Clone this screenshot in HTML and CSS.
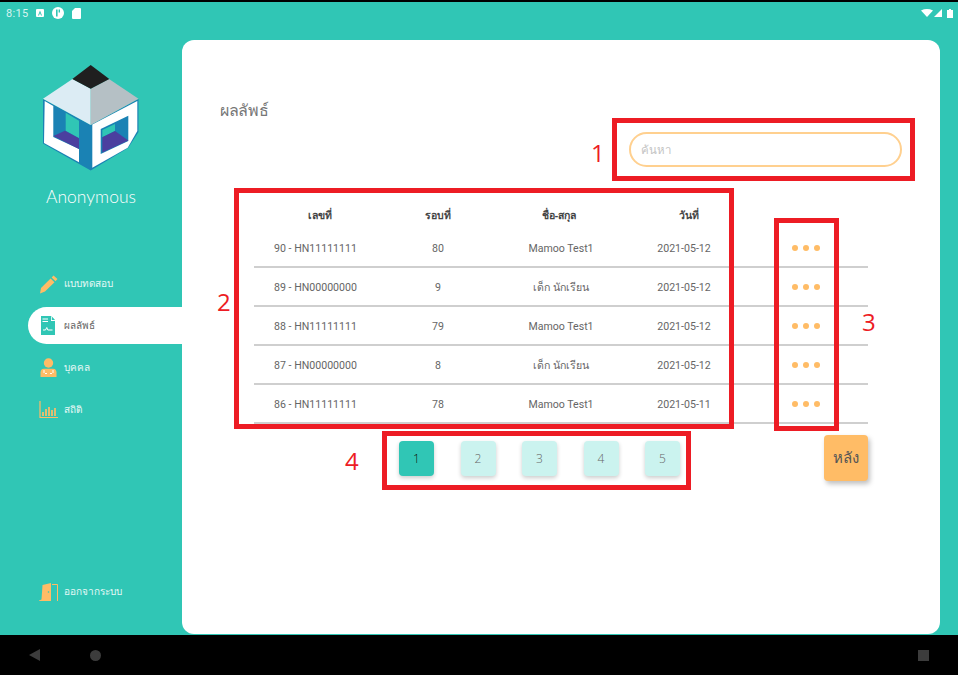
FILE: index.html
```html
<!DOCTYPE html>
<html lang="th">
<head>
    <meta charset="UTF-8">
    <meta name="viewport" content="width=device-width, initial-scale=1.0">
    <title>ผลลัพธ์</title>
    <link rel="stylesheet" href="styles.css">
</head>
<body>
    <div class="screen">
        <div class="status-bar">
            <div class="status-left">
                <span class="clock">8:15</span>
                <svg class="status-icon" width="8" height="8" viewBox="0 0 8 8"><rect width="8" height="8" rx="1" fill="#fff"/><path d="M4 1.6 6 6.4H5L4 4 3 6.4H2z" fill="#30c6b5"/></svg>
                <svg class="status-icon" width="12" height="12" viewBox="0 0 12 12"><circle cx="6" cy="6" r="6" fill="#fff"/><rect x="4" y="2.5" width="1.6" height="7" fill="#30c6b5"/><rect x="6.6" y="2.5" width="1.4" height="3" fill="#30c6b5"/></svg>
                <svg class="status-icon" width="9" height="11" viewBox="0 0 9 11"><path d="M3 0H8a1 1 0 0 1 1 1V10a1 1 0 0 1-1 1H1a1 1 0 0 1-1-1V3z" fill="#fff"/></svg>
            </div>
            <div class="status-right">
                <svg width="12" height="8" viewBox="0 0 12 8"><path d="M0 1.4Q6-1.4 12 1.4L6 8z" fill="#fff"/></svg>
                <svg width="8" height="8" viewBox="0 0 8 8"><path d="M8 0V8H0z" fill="#fff"/></svg>
                <svg class="battery" width="6" height="9" viewBox="0 0 6 9"><path d="M2 0H4V1H6V9H0V1H2z" fill="#fff"/></svg>
            </div>
        </div>

        <div class="main">
            <aside class="sidebar">
                <svg class="logo" width="98" height="106" viewBox="42 65 98 106">
                    <path d="M43 99 90.7 125 138.500 99V132L128 148 90.700 170.500 43 143.500z" fill="#1a82b4"/>
                    <path d="M44.700 101 53.300 106V137L79 149V162.300L44 143z" fill="#fff"/>
                    <path d="M65.700 112.700 79 120.700V138.300L65.700 130.700z" fill="#30c6b5"/>
                    <path d="M53.300 136 65 130.700 79 138.300V149z" fill="#4b3f9f"/>
                    <path d="M92.300 124.500 137.300 101V131L127.700 147.700 92.300 167.700z" fill="#fff"/>
                    <path d="M100.700 129 128.300 115.700V141L100.700 154z" fill="#1a82b4"/>
                    <path d="M102.300 130 115 124V131L102.300 137.300z" fill="#30c6b5"/>
                    <path d="M102.300 137.300 115 131 128.300 140.500 102.300 152.500z" fill="#4b3f9f"/>
                    <path d="M72.500 79 90.700 88.700V125L43 98.700z" fill="#dcecf4"/>
                    <path d="M109 79 138.500 98.700 90.700 125V88.700z" fill="#b5c0c5"/>
                    <path d="M90.700 65 109.300 79 90.700 88.700 72.300 79z" fill="#1f1f1f"/>
                </svg>
                <div class="user-name">Anonymous</div>

                <nav class="menu">
                    <a class="menu-item" href="#">
                        <svg width="20" height="20" viewBox="0 0 20 20"><path d="M14.500 1.500 18.500 5 16.500 7.200 12.600 3.600zM11.600 4.600 15.500 8.200 6 17.500 1 19.500 2 14z" fill="#ffbc66"/></svg>
                        <span>แบบทดสอบ</span>
                    </a>
                    <a class="menu-item active" href="#">
                        <svg width="20" height="20" viewBox="0 0 20 20"><path d="M2 0H12L16 4.500 16 19H2z" fill="#30c6b5"/><path d="M12 0V5H16.500z" fill="#fff"/><path d="M12.800 0.500 16 4H12.800z" fill="#30c6b5"/><path d="M3.500 3H9M3.500 5.500H9" stroke="#fff" stroke-width="1"/><path d="M4 14H6.500L7.800 11.500 8.800 14H13.500" stroke="#fff" stroke-width="1" fill="none"/></svg>
                        <span>ผลลัพธ์</span>
                    </a>
                    <a class="menu-item" href="#">
                        <svg width="20" height="20" viewBox="0 0 20 20"><circle cx="9.500" cy="5" r="4.700" fill="#ffbc66"/><path d="M1.500 19V14.500Q1.500 11 5 10.800H14Q17.500 11 17.500 14.500V19z" fill="#ffbc66"/><path d="M5 12V15M14 12V15M6 15.500H8M11 15.500H13" stroke="#fff" stroke-width="1" fill="none"/></svg>
                        <span>บุคคล</span>
                    </a>
                    <a class="menu-item" href="#">
                        <svg width="20" height="20" viewBox="0 0 20 20"><path d="M1 1V17.500H19" stroke="#ffbc66" stroke-width="1.200" fill="none"/><path d="M4 12V16M7 9V16M10 7V16M13 10V16M16 8V16" stroke="#ffbc66" stroke-width="1.700"/></svg>
                        <span>สถิติ</span>
                    </a>
                </nav>

                <a class="menu-item logout" href="#">
                    <svg width="20" height="20" viewBox="0 0 20 20"><path d="M0 18.500 2.500 17.500 3.500 3 12 1V19H0z" fill="#ffbc66"/><path d="M13 2.500H18.500V19" stroke="#ffbc66" stroke-width="1" fill="none"/><circle cx="9.500" cy="10" r="0.800" fill="#30c6b5"/></svg>
                    <span>ออกจากระบบ</span>
                </a>
            </aside>

            <section class="card">
                <h1 class="page-title">ผลลัพธ์</h1>
                <input class="search" type="text" placeholder="ค้นหา">

                <table class="result-table">
                    <thead>
                        <tr><th class="col-no">เลขที่</th><th class="col-round">รอบที่</th><th class="col-name">ชื่อ-สกุล</th><th class="col-date">วันที่</th><th></th></tr>
                    </thead>
                    <tbody>
                        <tr><td class="cell-no">90 - HN11111111</td><td>80</td><td class="cell-name">Mamoo Test1</td><td class="cell-date">2021-05-12</td><td class="dots"><i></i><i></i><i></i></td></tr>
                        <tr><td class="cell-no">89 - HN00000000</td><td>9</td><td class="cell-name">เด็ก นักเรียน</td><td class="cell-date">2021-05-12</td><td class="dots"><i></i><i></i><i></i></td></tr>
                        <tr><td class="cell-no">88 - HN11111111</td><td>79</td><td class="cell-name">Mamoo Test1</td><td class="cell-date">2021-05-12</td><td class="dots"><i></i><i></i><i></i></td></tr>
                        <tr><td class="cell-no">87 - HN00000000</td><td>8</td><td class="cell-name">เด็ก นักเรียน</td><td class="cell-date">2021-05-12</td><td class="dots"><i></i><i></i><i></i></td></tr>
                        <tr><td class="cell-no">86 - HN11111111</td><td>78</td><td class="cell-name">Mamoo Test1</td><td class="cell-date">2021-05-11</td><td class="dots"><i></i><i></i><i></i></td></tr>
                    </tbody>
                </table>

                <div class="table-footer">
                    <div class="pager">
                        <button class="page-btn current">1</button>
                        <button class="page-btn">2</button>
                        <button class="page-btn">3</button>
                        <button class="page-btn">4</button>
                        <button class="page-btn">5</button>
                    </div>
                    <button class="back-btn">หลัง</button>
                </div>
            </section>
        </div>

        <div class="nav-bar">
            <svg width="12" height="12" viewBox="0 0 12 12"><path d="M11 0V12L0 6z" fill="#3c3c3c"/></svg>
            <span class="nav-home"></span>
            <span class="nav-recent"></span>
        </div>

        <!-- numbered callouts drawn over the screenshot -->
        <div class="mark mark-search"></div>
        <div class="mark mark-table"></div>
        <div class="mark mark-dots"></div>
        <div class="mark mark-pager"></div>
        <span class="mark-num num-1">1</span>
        <span class="mark-num num-2">2</span>
        <span class="mark-num num-3">3</span>
        <span class="mark-num num-4">4</span>
    </div>
</body>
</html>
```

FILE: styles.css
```css
:root {
    --teal: #30c6b5;
    --orange: #ffbc66;
    --red: #ed1c24;
    --line: #cfcfcf;
    --thai: "Noto Sans", "DejaVu Sans", sans-serif;
}

* {
    box-sizing: border-box;
}

body {
    margin: 0;
    background: #000;
    font-family: Roboto, "Noto Sans", sans-serif;
    color: #666;
}

.screen {
    position: relative;
    width: 958px;
    height: 675px;
    padding-top: 2px;
    display: flex;
    flex-direction: column;
    overflow: hidden;
}

.status-bar {
    height: 38px;
    flex: none;
    background: var(--teal);
    display: flex;
    justify-content: space-between;
    padding: 4px 5px 0 6px;
    color: #d8f4f0;
}

.status-left,
.status-right {
    display: flex;
    align-items: center;
    height: 14px;
}

.status-right {
    gap: 1px;
}

.battery {
    margin-left: 4px;
}

.clock {
    font-size: 11px;
    width: 30px;
    letter-spacing: 0.3px;
}

.status-icon {
    margin-right: 8px;
}

.main {
    flex: 1;
    display: flex;
    background: var(--teal);
}

.sidebar {
    width: 182px;
    flex: none;
    display: flex;
    flex-direction: column;
    padding: 25px 0 25px 0;
}

.logo {
    margin-left: 42px;
    display: block;
}

.user-name {
    margin-top: 14px;
    width: 182px;
    text-align: center;
    color: #fff;
    font-family: Lato, sans-serif;
    font-weight: 300;
    font-size: 17.500px;
    line-height: 24px;
}

.menu {
    margin-top: 56px;
    display: flex;
    flex-direction: column;
    gap: 5px;
}

.menu-item {
    height: 37px;
    margin-left: 28px;
    padding-left: 11px;
    display: flex;
    align-items: center;
    gap: 5px;
    color: #e6f8f5;
    font-family: var(--thai);
    font-size: 10px;
    text-decoration: none;
}

.menu-item.active {
    background: #fff;
    color: #666;
    border-radius: 19px 0 0 19px;
}

.logout {
    margin-top: auto;
}

.card {
    width: 758px;
    height: 594px;
    background: #fff;
    border-radius: 12px;
    padding: 58px 38px 0;
}

.page-title {
    margin: 0;
    font-family: var(--thai);
    font-size: 16px;
    font-weight: 300;
    line-height: 24px;
    letter-spacing: -0.3px;
    color: #777;
}

.search {
    display: block;
    width: 273px;
    height: 35px;
    margin: 10px 0 0 auto;
    padding: 0 10px;
    border: 2px solid #ffd08f;
    border-radius: 18px;
    outline: none;
    font-family: var(--thai);
    font-size: 11.500px;
}

.search::placeholder {
    color: #c4c4c4;
}

.result-table {
    width: 614px;
    margin: 30px 34px 0;
    border-collapse: collapse;
    table-layout: fixed;
    font-size: 10.600px;
}

.result-table th {
    height: 31px;
    padding-top: 6px;
    color: #444;
    font-family: var(--thai);
    font-size: 10.500px;
    font-weight: 700;
}

.col-no { width: 132px; }
.col-round { width: 104px; }
.col-name { width: 138px; }
.col-date { width: 122px; }

.result-table td {
    height: 39px;
    padding: 2px 0 0;
    text-align: center;
    border-bottom: 2px solid var(--line);
}

.result-table .cell-no {
    padding-right: 9px;
}

.result-table .cell-name {
    padding-left: 4px;
}

.result-table .cell-date {
    padding-right: 10px;
}

.result-table .dots {
    padding: 0 6px 0 0;
}

.dots i {
    display: inline-block;
    width: 6px;
    height: 6px;
    margin: 0 2.350px;
    border-radius: 50%;
    background: var(--orange);
    vertical-align: middle;
}

.table-footer {
    width: 614px;
    margin: 11px 34px 0;
    display: flex;
    justify-content: space-between;
    align-items: flex-start;
}

.pager {
    margin: 6px 0 0 145px;
    display: flex;
    gap: 26.500px;
}

.page-btn {
    width: 35px;
    height: 35px;
    padding: 0;
    border: none;
    border-radius: 4px;
    background: #cbf3ef;
    color: #666;
    font-family: "Open Sans", sans-serif;
    font-weight: 300;
    font-size: 12px;
    box-shadow: 0 2px 4px rgba(0, 0, 0, 0.2);
}

.page-btn.current {
    background: var(--teal);
    color: #111;
}

.back-btn {
    width: 44px;
    height: 46px;
    padding: 0;
    border: none;
    border-radius: 4px;
    background: var(--orange);
    color: #555;
    font-family: var(--thai);
    font-size: 15px;
    font-weight: 300;
    box-shadow: 2px 3px 5px rgba(0, 0, 0, 0.25);
}

.nav-bar {
    position: relative;
    height: 40px;
    flex: none;
    background: #000;
    display: flex;
    align-items: center;
    padding-left: 29px;
}

.nav-home {
    width: 11px;
    height: 11px;
    margin-left: 49px;
    border-radius: 50%;
    background: #3c3c3c;
}

.nav-recent {
    width: 11px;
    height: 11px;
    margin-left: auto;
    margin-right: 29px;
    background: #3c3c3c;
}

.mark {
    position: absolute;
    border: 5px solid var(--red);
}

.mark-search { left: 612px; top: 118px; width: 303px; height: 63px; }
.mark-table { left: 234px; top: 188px; width: 500px; height: 241px; }
.mark-dots { left: 774px; top: 218px; width: 65px; height: 213px; }
.mark-pager { left: 382px; top: 431px; width: 309px; height: 59px; }

.mark-num {
    position: absolute;
    color: var(--red);
    font-family: "Open Sans", sans-serif;
    font-size: 24px;
    line-height: 30px;
}

.num-1 { left: 591px; top: 138px; }
.num-2 { left: 217px; top: 287px; }
.num-3 { left: 862px; top: 307px; }
.num-4 { left: 345px; top: 446px; }
```
